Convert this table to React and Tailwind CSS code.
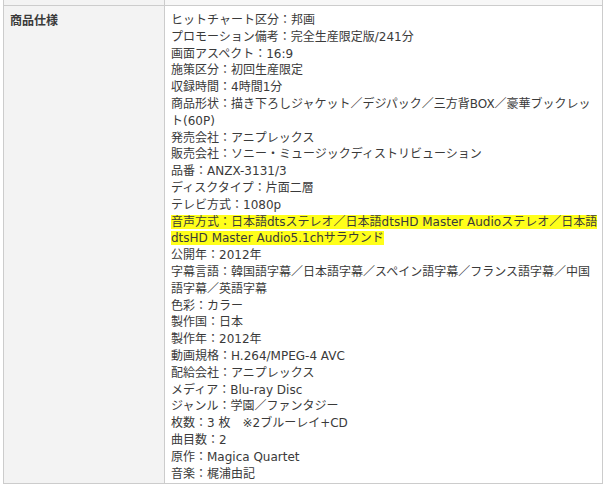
const specs = [
  ["ヒットチャート区分：邦画"],
  ["プロモーション備考：完全生産限定版/241分"],
  ["画面アスペクト：16:9"],
  ["施策区分：初回生産限定"],
  ["収録時間：4時間1分"],
  ["商品形状：描き下ろしジャケット／デジパック／三方背BOX／豪華ブックレッ", "ト(60P)"],
  ["発売会社：アニプレックス"],
  ["販売会社：ソニー・ミュージックディストリビューション"],
  ["品番：ANZX-3131/3"],
  ["ディスクタイプ：片面二層"],
  ["テレビ方式：1080p"],
  ["音声方式：日本語dtsステレオ／日本語dtsHD Master Audioステレオ／日本語", "dtsHD Master Audio5.1chサラウンド"],
  ["公開年：2012年"],
  ["字幕言語：韓国語字幕／日本語字幕／スペイン語字幕／フランス語字幕／中国", "語字幕／英語字幕"],
  ["色彩：カラー"],
  ["製作国：日本"],
  ["製作年：2012年"],
  ["動画規格：H.264/MPEG-4 AVC"],
  ["配給会社：アニプレックス"],
  ["メディア：Blu-ray Disc"],
  ["ジャンル：学園／ファンタジー"],
  ["枚数：3 枚　※2ブルーレイ+CD"],
  ["曲目数：2"],
  ["原作：Magica Quartet"],
  ["音楽：梶浦由記"],
];

function SpecLine({ parts }) {
  const highlighted = parts[0].startsWith("音声方式");
  const content = parts.map((p, i) => (
    <span key={i}>
      {i > 0 && <br />}
      {p}
    </span>
  ));
  return (
    <div className="whitespace-pre">
      {highlighted ? <span className="bg-[#ffff1a]">{content}</span> : content}
    </div>
  );
}

export default function App() {
  return (
    <div className="min-h-screen bg-white text-[#3a3a3a] text-[12px] leading-[16.8px] font-['DejaVu_Sans','Noto_Sans_CJK_JP',sans-serif]">
      <div className="ml-[3px] w-[600px] border-x border-[#cccccc]">
        {/* tail of the previous row */}
        <div className="grid grid-cols-[161px_1fr] h-[5px]">
          <div className="bg-[#f3f3f3] border-r border-[#cccccc]" />
          <div className="bg-[#f7f7f7]" />
        </div>

        <div className="grid grid-cols-[161px_1fr] border-y border-[#cccccc]">
          <div className="bg-[#f3f3f3] border-r border-[#cccccc] pl-[6px] pt-[6px] font-bold font-['Noto_Sans_CJK_JP',sans-serif]">
            商品仕様
          </div>
          <div className="pl-[6px] pt-[6px] pb-[1px]">
            {specs.map((s, i) => (
              <SpecLine key={i} parts={s} />
            ))}
          </div>
        </div>
      </div>
    </div>
  );
}
